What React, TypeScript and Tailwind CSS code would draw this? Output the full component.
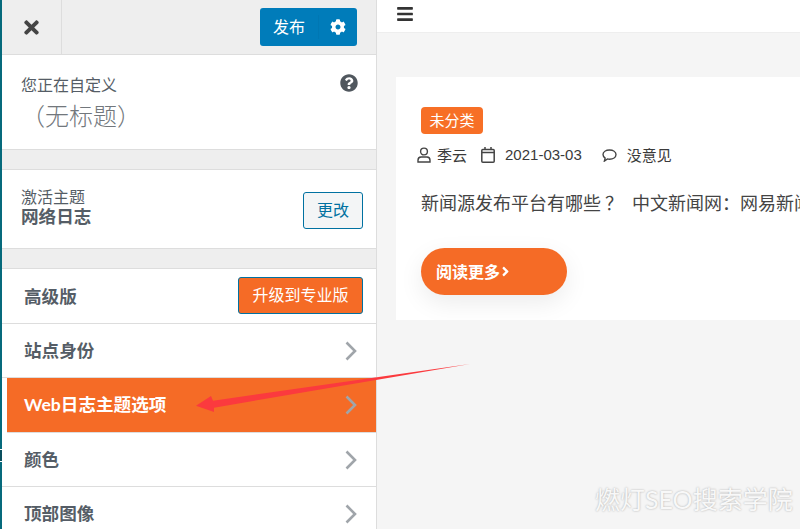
import { FaAngleRight, FaBars, FaCog, FaQuestionCircle, FaTimes } from 'react-icons/fa';

const font = "font-['Lato','Noto_Sans_CJK_SC',sans-serif]";

function Gap() {
  return <div className="h-[20px] shrink-0 bg-[#eeeeee] border-b border-[#dddddd]" />;
}

function Chevron() {
  return (
    <svg width="12" height="20" viewBox="0 0 12 20" fill="none" stroke="#a0a5aa" strokeWidth="2.6">
      <path d="M1.500 1.500 L10 10 L1.500 18.500" />
    </svg>
  );
}

function MenuRow({ label, active }: { label: string; active?: boolean }) {
  return (
    <div
      className={
        active
          ? 'h-[55px] shrink-0 ml-[5px] pl-[17px] pr-[19px] flex items-center justify-between bg-[#f56b26] border-b border-[#dddddd]'
          : 'h-[54px] shrink-0 pl-[22px] pr-[19px] flex items-center justify-between bg-white border-b border-[#dddddd]'
      }
    >
      <span className={active ? 'pt-[1px] text-[17.600px] font-bold text-white' : 'pt-[2px] text-[17.600px] font-bold text-[#555d66]'}>
        {label}
      </span>
      <Chevron />
    </div>
  );
}

export default function App() {
  return (
    <div className={`relative w-[800px] h-[529px] overflow-hidden flex bg-[#f5f5f5] ${font}`}>
      <div className="w-[2px] shrink-0 flex flex-col bg-[#066a7c]">
        <div className="h-[449px]" />
        <div className="h-px bg-white" />
        <div className="h-[11px] bg-[#0a4f5e]" />
        <div className="h-px bg-white" />
      </div>

      {/* customizer sidebar */}
      <div className="w-[375px] shrink-0 flex flex-col bg-white border-r border-[#dddddd]">
        <div className="h-[55px] shrink-0 flex items-center justify-between bg-[#eeeeee] border-b border-[#dddddd] pr-[19px]">
          <div className="w-[60px] h-full flex items-center justify-center border-r border-[#dddddd] text-[#444444]">
            <FaTimes size={21} />
          </div>
          <div className="w-[97px] h-[38px] flex items-center rounded-[3px] bg-[#007cba] text-white">
            <span className="w-[59px] text-center text-[16px] border-r border-[#0077b3]">发布</span>
            <FaCog size={16} className="ml-[11px]" />
          </div>
        </div>

        <div className="h-[95px] shrink-0 relative px-[19px] pt-[20px] border-b border-[#dddddd]">
          <div className="text-[16px] leading-[20px] text-[#555d66]">您正在自定义</div>
          <div className="mt-[6px] text-[24px] leading-[30px] font-light text-[#72777c]">（无标题）</div>
          <FaQuestionCircle size={18} className="absolute right-[18px] top-[19px] text-[#50575e]" />
        </div>
        <Gap />

        <div className="h-[79px] shrink-0 flex items-center justify-between pl-[19px] pr-[13px] border-b border-[#dddddd]">
          <div className="mb-[4px]">
            <div className="text-[16px] leading-[20px] text-[#555d66]">激活主题</div>
            <div className="text-[17.600px] leading-[20px] font-bold text-[#555d66]">网络日志</div>
          </div>
          <div className="mt-[2px] w-[60px] h-[37px] flex items-center justify-center rounded-[3px] border border-[#0071a1] bg-[#f3f5f6] text-[16px] text-[#0071a1]">
            更改
          </div>
        </div>
        <Gap />

        <div className="h-[55px] shrink-0 flex items-center justify-between pl-[22px] pr-[13px] border-b border-[#dddddd]">
          <span className="pt-[2px] text-[17.600px] font-bold text-[#555d66]">高级版</span>
          <div className="mb-[2px] w-[125px] h-[37px] flex items-center justify-center rounded-[3px] border border-[#0071a1] bg-[#f56b26] text-[16px] text-white">
            升级到专业版
          </div>
        </div>

        <MenuRow label="站点身份" />
        <MenuRow label="Web日志主题选项" active />
        <MenuRow label="颜色" />
        <MenuRow label="顶部图像" />
      </div>

      {/* site preview */}
      <div className="flex-1 min-w-0">
        <div className="h-[33px] pt-[5px] pl-[19px] bg-white border-b border-[#eeeeee] text-[#333333]">
          <FaBars size={18} />
        </div>
        <div className="ml-[19px] mt-[44px] h-[243px] bg-white pl-[25px] pt-[30px] overflow-hidden">
          <div className="w-[62px] h-[27px] flex items-center justify-center rounded-[4px] bg-[#f76f26] text-[15px] text-white">
            未分类
          </div>
          <div className="mt-[11px] -ml-[4px] h-[20px] flex items-center text-[15px] text-[#3a3a3a] whitespace-nowrap">
            <svg width="14" height="16" viewBox="0 0 14 16" fill="none" stroke="#444" strokeWidth="1.400">
              <circle cx="7" cy="4.500" r="3.400" />
              <path d="M1 15v-1.800c0-2 1.500-3.200 3-3.200h6c1.500 0 3 1.200 3 3.200V15z" />
            </svg>
            <span className="ml-[6px]">季云</span>
            <svg width="14" height="16" viewBox="0 0 14 16" fill="none" stroke="#444" strokeWidth="1.500" className="ml-[14px]">
              <rect x="0.800" y="2.500" width="12.400" height="12.700" rx="1" />
              <path d="M0.800 5.500h12.400M4 0v3M10 0v3" />
            </svg>
            <span className="ml-[10px] font-['Liberation_Sans',sans-serif]">2021-03-03</span>
            <svg width="15" height="13" viewBox="0 0 16 14" fill="none" stroke="#444" strokeWidth="1.500" className="ml-[20px]">
              <path d="M8 1c3.800 0 7 2 7 5s-3.200 5-7 5c-.8 0-1.500-.1-2.200-.3L2.500 13l.8-3.200C1.900 8.900 1 7.600 1 6c0-3 3.200-5 7-5z" />
            </svg>
            <span className="ml-[10px]">没意见</span>
          </div>
          <div className="mt-[26px] text-[18px] leading-[24px] text-[#444444] whitespace-nowrap">
            新闻源发布平台有哪些<span className="ml-[4px]">？</span>
            <span className="ml-[9px]">中文新闻网：网易新闻</span>
          </div>
          <div className="mt-[33px] w-[146px] h-[47px] flex items-center pl-[15px] rounded-[24px] bg-[#f56b26] text-[16px] font-bold text-white shadow-[0_8px_24px_rgba(0,0,0,0.08)]">
            阅读更多
            <FaAngleRight size={15} className="-ml-[2px]" />
          </div>
        </div>
      </div>

      {/* annotation arrow */}
      <svg className="absolute left-0 top-0 pointer-events-none" width="800" height="529" viewBox="0 0 800 529">
        <path d="M470 364 L213 400.700 L211 396 L196 405.700 L214 412 L214 407.700 Z" fill="#fb3a3e" />
      </svg>

      {/* watermark */}
      <div className="absolute left-[595px] top-[484px] text-[25px] leading-[30px] text-[#f8f8f8] whitespace-nowrap [text-shadow:0_0_2px_#a8a8a8]">
        燃灯SEO搜索学院
      </div>
    </div>
  );
}
